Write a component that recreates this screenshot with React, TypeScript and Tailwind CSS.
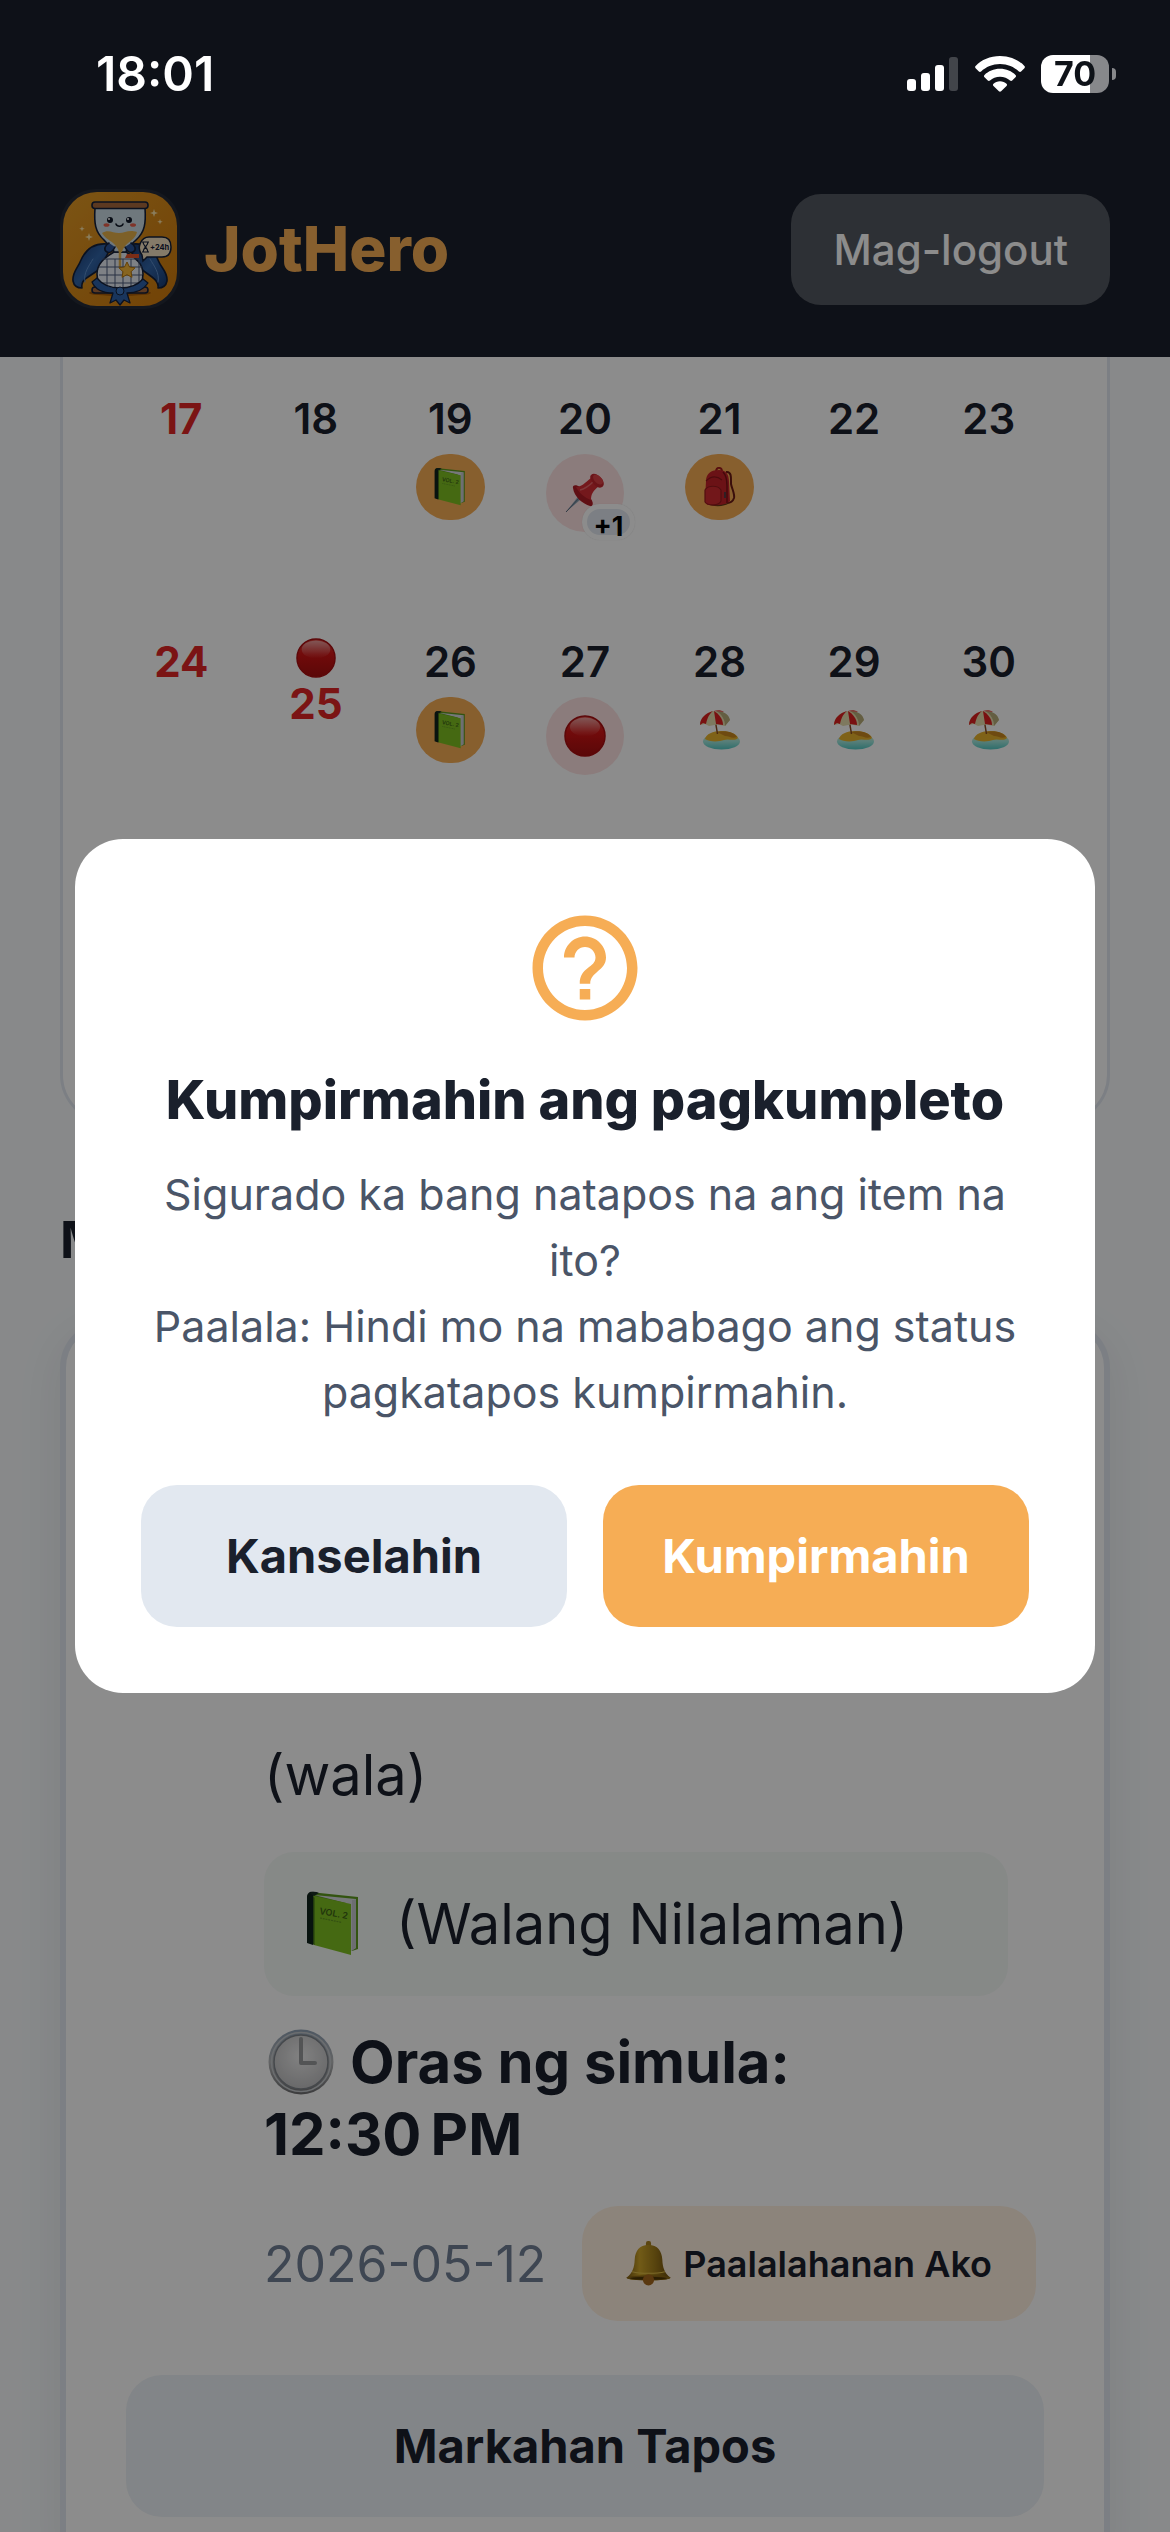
import React from "react";

function StatusBar() {
  return (
    <div className="fixed inset-x-0 top-0 z-30 flex h-[148px] items-center justify-between pr-[54px] pl-24 text-white">
      <span className="text-[48px] leading-[56px] font-semibold">18:01</span>
      <div className="flex items-center gap-4">
        <svg className="h-9 w-[52px]" viewBox="0 0 52 36" fill="#fff" aria-hidden="true">
          <rect x="0" y="23" width="9" height="12" rx="3" />
          <rect x="14" y="17" width="9" height="18" rx="3" />
          <rect x="28" y="9" width="9" height="26" rx="3" />
          <rect x="42" y="1" width="9" height="34" rx="3" fillOpacity=".22" />
        </svg>
        <svg className="h-9 w-[50px]" viewBox="0 0 50 36" fill="#fff" aria-hidden="true">
          <path d="M25 0C34.8 0 43.6 3.8 49.4 9.9c.7.7.7 1.6 0 2.3l-3.3 3.3c-.6.6-1.5.6-2.2 0C39.1 10.900 32.4 8 25 8S10.900 10.900 6.100 15.500c-.7.6-1.600.6-2.200 0L.6 12.200c-.7-.7-.7-1.600 0-2.300C6.400 3.800 15.200 0 25 0z" />
          <path d="M25 12.800c6.200 0 11.800 2.400 15.500 6.200.7.7.7 1.600 0 2.300l-3.300 3.300c-.6.6-1.500.6-2.200 0-2.500-2.400-6-3.900-10-3.900s-7.500 1.500-10 3.900c-.7.6-1.600.6-2.200 0l-3.300-3.300c-.7-.7-.7-1.600 0-2.300C13.200 15.200 18.800 12.800 25 12.800z" />
          <path d="M25 25.200c2.600 0 4.900.9 6.500 2.500.7.7.7 1.500 0 2.200l-5.400 5.400c-.6.6-1.600.6-2.200 0l-5.400-5.400c-.7-.7-.7-1.500 0-2.200 1.600-1.600 3.900-2.500 6.500-2.500z" />
        </svg>
        <div className="flex items-center gap-[3px]">
          <div className="flex h-[38px] w-[68px] items-center justify-center rounded-[12px] bg-linear-to-r from-white from-72% to-[#87888b] to-72% text-[34px] leading-[38px] font-bold text-[#0e1218]">
            70
          </div>
          <div className="h-3 w-1 rounded-r-full bg-[#87888b]" />
        </div>
      </div>
    </div>
  );
}

function Logo() {
  return (
    <div className="size-[120px] rounded-[36px] bg-white/5 p-[3px]">
      <svg className="size-full rounded-[34px]" viewBox="0 0 114 114" role="img" aria-label="JotHero">
        <defs>
          <linearGradient id="lg-bg" x1="0" y1="0" x2="1" y2="1">
            <stop offset="0" stopColor="#e29a26" />
            <stop offset="1" stopColor="#cf7a0c" />
          </linearGradient>
          <linearGradient id="lg-cape" x1="0" y1="0" x2="1" y2="1">
            <stop offset="0" stopColor="#17366c" />
            <stop offset=".5" stopColor="#3265a8" />
            <stop offset="1" stopColor="#17386e" />
          </linearGradient>
        </defs>
        <rect width="114" height="114" fill="url(#lg-bg)" />
        <ellipse cx="57" cy="101" rx="31" ry="3" fill="#a85c08" />
        <g stroke="#14203a" strokeWidth="1.6" strokeLinejoin="round" strokeLinecap="round">
          <path d="M44 52c-12-1-21 5-26 16-3 8-9 12-8 21 1 5 4 7 9 7-1-5 1-8 6-11l12-8 8-16z" fill="url(#lg-cape)" />
          <path d="M70 52c12-1 21 5 25 16 3 8 10 12 9 21-1 5-4 7-9 7 1-5-2-8-6-11l-11-8-9-16z" fill="url(#lg-cape)" />
          <path d="M22 90c-2-9 4-16 8-23M95 90c2-9-4-16-8-23" fill="none" stroke="#5d8cc8" strokeWidth="1" />
          <rect x="29" y="95" width="56" height="6" rx="3" fill="#a8683c" />
          <path d="M51 60c-10 6-17 12-17 22 0 6 3 12 8 15h30c5-3 8-9 8-15 0-10-7-16-17-22z" fill="#e6ecf2" />
          <path d="M32 16h50c1 15 0 24-9 32-5 5-9 7-10 12H51c-1-5-6-7-10-12-9-8-10-17-9-32z" fill="#cbdbe3" />
          <rect x="29" y="10" width="56" height="6.500" rx="3" fill="#a8683c" />
          <path d="M46 51c-4 2-6 7-2 9s7-3 8-5M68 51c4 2 6 7 2 9s-7-3-8-5" fill="#2a559b" />
        </g>
        <path d="M39 41c6-4 11 0 17 0s10-4 18-1c-1 5-5 8-10 12-2 2-4 4-5 8h-3c-1-4-3-6-6-9-4-3-9-6-11-10z" fill="#e3b04a" />
        <path d="M57 58v18" stroke="#e3b04a" strokeWidth="2.500" />
        <path d="M64 62h12v4H62z" fill="#e0532a" />
        <path d="M39 67h38M36 75h43M36 83h43M38 91h39M44 67v28M52 67v29M60 67v29M68 67v29M76 67v26" stroke="#4a5a7a" strokeWidth="1" fill="none" />
        <path d="M64 70l2.500 5 5.500.8-4 4 1 5.500-5-2.600-5 2.600 1-5.500-4-4 5.500-.8z" fill="#f6b93b" stroke="#b9770c" strokeWidth="1" />
        <path d="M34 86c7 9 16 10 23 10s16-1 23-9l5 4c-4 6-11 10-21 10l3 10-6-3-4 5-4-5-6 3 3-10c-10 0-18-4-21-11z" fill="#2f62a8" stroke="#14203a" strokeWidth="1.300" strokeLinejoin="round" />
        <circle cx="57" cy="99" r="4" fill="#3b75c0" stroke="#14203a" strokeWidth="1" />
        <circle cx="47" cy="28" r="3" fill="#101828" />
        <circle cx="66" cy="28" r="3" fill="#101828" />
        <circle cx="46" cy="27" r="1" fill="#fff" />
        <circle cx="65" cy="27" r="1" fill="#fff" />
        <ellipse cx="43.500" cy="33" rx="3" ry="1.800" fill="#e8604c" />
        <ellipse cx="70" cy="33" rx="3" ry="1.800" fill="#e8604c" />
        <path d="M53 32c1 3 6 3 7 0" stroke="#101828" strokeWidth="1.500" fill="none" strokeLinecap="round" />
        <path d="M86 45h13c6 0 9 4 9 10s-3 10-9 10H84l-4 4-1-6c-6-7-1-18 7-18z" fill="#f1dfc0" stroke="#14203a" strokeWidth="1.500" />
        <path d="M79 50h7M79 60h7M80 50c0 4 5 6 5 10M85 50c0 4-5 6-5 10" stroke="#14203a" strokeWidth="1.200" fill="none" />
        <text x="87" y="58" fontSize="7.500" fontWeight="700" fill="#14203a">+24h</text>
        <path d="M91 17l1 3 3 1-3 1-1 3-1-3-3-1 3-1zM26 41l1 3 3 1-3 1-1 3-1-3-3-1 3-1zM97 27l.7 2 2 .7-2 .7-.7 2-.7-2-2-.7 2-.7zM19 34l.7 2 2 .7-2 .7-.7 2-.7-2-2-.7 2-.7z" fill="#fbe3a8" />
      </svg>
    </div>
  );
}

function Book({ className }: { className: string }) {
  return (
    <svg className={className} viewBox="0 0 54 66" aria-label="Libro" role="img">
      <path d="M4 1L52 6V58L46 60L3 52z" fill="#5d9a1e" />
      <path d="M8 4L50 8V57L44 61L40 12z" fill="#d8dadf" />
      <path d="M47 9v50M49 8.500v49" stroke="#a9acb3" strokeWidth=".8" />
      <path d="M8 5L45 13V64L8 54z" fill="#7fc022" />
      <path d="M1 6C1 2 4 0 8 1l4 .500C8 2 7 4 7 7V54L1 52z" fill="#10231c" />
      <path d="M7 6l1.500.500V54L7 53.500z" fill="#3f6b18" />
      <path d="M4 2c3-2 6-1 9 0L8 5z" fill="#1b2f26" />
      <text x="13" y="23" fontSize="9" fontWeight="600" fill="#3d6216" transform="rotate(10 13 23)">VOL. 2</text>
      <path d="M14 27l22 4.500" stroke="#5f9520" strokeWidth="1.200" strokeDasharray="2 .8" />
    </svg>
  );
}

function RedDot({ className }: { className: string }) {
  return (
    <svg className={className} viewBox="0 0 42 42" aria-label="Pulang bilog" role="img">
      <defs>
        <linearGradient id="dot-base" x1="0" y1="0" x2="0" y2="1">
          <stop offset="0" stopColor="#d8403c" />
          <stop offset=".4" stopColor="#d01414" />
          <stop offset="1" stopColor="#a40f10" />
        </linearGradient>
        <linearGradient id="dot-gloss" x1="0" y1="0" x2="0" y2="1">
          <stop offset="0" stopColor="#fff" stopOpacity=".5" />
          <stop offset="1" stopColor="#fff" stopOpacity="0" />
        </linearGradient>
      </defs>
      <circle cx="21" cy="21" r="20" fill="url(#dot-base)" stroke="#a80d10" strokeWidth="1.500" />
      <ellipse cx="21" cy="12" rx="15" ry="9.500" fill="url(#dot-gloss)" />
    </svg>
  );
}

function Pin({ className }: { className: string }) {
  return (
    <svg className={className} viewBox="0 0 40 40" aria-label="Pin" role="img">
      <path d="M1 39L15 21l3.500 3z" fill="#8fa3b5" />
      <path d="M1 39L16.500 22.500" stroke="#56697c" strokeWidth="1" />
      <path d="M8 15c-1-3 3-4 7-1l11 12c3 4 2 8-1 7C18 31 9 24 8 15z" fill="#b01c25" />
      <path d="M11 14C16 14 20 10 26 5L34 13C28 18 26 21 26 27 20 25 14 20 11 14z" fill="#d42c34" />
      <path d="M15 17c5-1 10-5 14-9" stroke="#e8666a" strokeWidth="1.500" fill="none" />
      <path d="M26 2c3-3 7 0 10 3s4 7 1 9-7-1-9-4-4-6-2-8z" fill="#c4262e" />
      <ellipse cx="33" cy="6.500" rx="6" ry="3.500" transform="rotate(45 33 6.500)" fill="#dc4145" />
    </svg>
  );
}

function Backpack({ className }: { className: string }) {
  return (
    <svg className={className} viewBox="0 0 32 40" aria-label="Bag" role="img">
      <path d="M22 5c6-1 5 7 5 12 1 5 4 10 3 14-1 3-4 5-7 5" fill="none" stroke="#6b1a14" strokeWidth="2" />
      <path d="M12 5c0-6 6-5 6 0" fill="none" stroke="#a01a1c" strokeWidth="2" />
      <path d="M3 37c6 3 18 3 22-1z" fill="#5f3a14" />
      <path d="M2 14C2 6 8 3 15 3c7 0 10 4 10 12l1 19c-3 4-14 5-20 4C2 38 1 36 1 33z" fill="#c42228" />
      <path d="M19 5c3 3 4 8 4 14v17" fill="none" stroke="#7d1216" strokeWidth="1.500" />
      <path d="M2 14C7 9 13 9 18 13" fill="none" stroke="#8c1519" strokeWidth="1.200" />
      <path d="M1 23c3-5 13-5 16 0v11c-2 5-13 5-16 1z" fill="#d02b31" stroke="#951a1d" strokeWidth="1.200" />
      <path d="M21 25v6" stroke="#35404a" strokeWidth="1.500" />
    </svg>
  );
}

function Beach({ className }: { className: string }) {
  return (
    <svg className={className} viewBox="0 0 40 40" aria-label="Bakasyon" role="img">
      <defs>
        <linearGradient id="sea" x1="0" y1="0" x2="0" y2="1">
          <stop offset="0" stopColor="#e9e6c0" />
          <stop offset=".5" stopColor="#9fe6dc" />
          <stop offset="1" stopColor="#52c9c4" />
        </linearGradient>
      </defs>
      <ellipse cx="21.500" cy="31.500" rx="18.500" ry="8" fill="url(#sea)" />
      <path d="M5 29c1-5 8-8 16-8 9 0 16 3 17 7-4 4-9 0-14 2S9 32 5 29z" fill="#e8b32c" />
      <path d="M17 22c8-2 17 0 20 5-5 2-8-1-12-1z" fill="#c9871f" />
      <path d="M15 9l2.500 15" stroke="#8a4c22" strokeWidth="1.500" />
      <path d="M0 15C0 7 7 2 14 1c7 0 14 3 16 9l-5 6-8-1.500-8 1.500-4-2z" fill="#e5dcae" />
      <path d="M0 15C0 8 6 3 13 1 8 5 7 10 6 14l-3-1z" fill="#dc1f1f" />
      <path d="M14 1c5 3 9 8 9 14l-7-1z" fill="#dc1f1f" />
      <path d="M16 1c7 0 13 3 14 9l-5 6c0-6-3-12-9-15z" fill="#b7ab78" />
      <path d="M14 1c3-1.500 8-1 10 1-3 0-6-1-10-1z" fill="#e4473c" />
    </svg>
  );
}

function Clock({ className }: { className: string }) {
  return (
    <svg className={className} viewBox="0 0 66 66" aria-label="Orasan" role="img">
      <defs>
        <linearGradient id="clk-rim" x1="0" y1="0" x2="0" y2="1">
          <stop offset="0" stopColor="#8fa0b3" />
          <stop offset=".5" stopColor="#b4b6b8" />
          <stop offset="1" stopColor="#6e6e70" />
        </linearGradient>
        <radialGradient id="clk-face" cx=".5" cy=".4" r=".7">
          <stop offset="0" stopColor="#ececec" />
          <stop offset="1" stopColor="#b8b8ba" />
        </radialGradient>
      </defs>
      <circle cx="33" cy="33" r="32.500" fill="url(#clk-rim)" />
      <circle cx="33" cy="33" r="29.500" fill="none" stroke="#c3c7cb" strokeWidth="1.500" />
      <circle cx="33" cy="33" r="27" fill="url(#clk-face)" stroke="#7f848a" strokeWidth="1.500" />
      <path d="M33 10v24h14" fill="none" stroke="#97999c" strokeWidth="4" strokeLinecap="round" strokeLinejoin="round" />
    </svg>
  );
}

function Bell({ className }: { className: string }) {
  return (
    <svg className={className} viewBox="0 0 44 44" aria-hidden="true">
      <defs>
        <linearGradient id="bell-g" x1="0" y1="0" x2="1" y2="0">
          <stop offset="0" stopColor="#7d5a12" />
          <stop offset=".3" stopColor="#cfa62a" />
          <stop offset=".65" stopColor="#a07c1a" />
          <stop offset="1" stopColor="#6a4a0e" />
        </linearGradient>
      </defs>
      <rect x="19.500" y="0" width="5" height="7" rx="2" fill="#a8801e" />
      <path d="M22 4c9 0 13 6 13.500 14 .3 8 2 13 8 18-2 2-10 2.500-21.500 2.500S2.500 38 .5 36c6-5 7.700-10 8-18C9 10 13 4 22 4z" fill="url(#bell-g)" />
      <ellipse cx="22" cy="36" rx="21.500" ry="2.500" fill="#8a6614" />
      <ellipse cx="22" cy="36.500" rx="18" ry="1.500" fill="#4f3707" />
      <circle cx="22" cy="38" r="5.500" fill="#a4661c" />
      <path d="M6 30c8 2 24 2 32 0" stroke="#e2c04a" strokeWidth="1" fill="none" />
    </svg>
  );
}

type Day = {
  n: number;
  holiday?: boolean;
  dot?: boolean;
  item?: React.ReactNode;
};

function Chip({ children }: { children: React.ReactNode }) {
  return <div className="flex h-[66px] w-[69px] items-center justify-center rounded-[33px] bg-[#f6ad55]">{children}</div>;
}

function Target({ children, more }: { children: React.ReactNode; more?: string }) {
  return (
    <div className="relative flex size-[78px] items-center justify-center rounded-full bg-[#fee2e2]">
      {children}
      {more && (
        <span className="absolute -right-[11px] -bottom-2 flex h-9 w-[53px] items-center justify-center rounded-full border-[5px] border-white bg-[#e2e8f0] pt-2 text-[27px] leading-none font-bold text-black shadow-[0_0_1px_rgba(0,0,0,0.15)]">
          {more}
        </span>
      )}
    </div>
  );
}

const weeks: Day[][] = [
  [
    { n: 17, holiday: true },
    { n: 18 },
    { n: 19, item: <Chip><Book className="h-10 w-8" /></Chip> },
    { n: 20, item: <Target more="+1"><Pin className="size-10" /></Target> },
    { n: 21, item: <Chip><Backpack className="h-10 w-8" /></Chip> },
    { n: 22 },
    { n: 23 },
  ],
  [
    { n: 24, holiday: true },
    { n: 25, holiday: true, dot: true },
    { n: 26, item: <Chip><Book className="h-10 w-8" /></Chip> },
    { n: 27, item: <Target><RedDot className="size-[42px]" /></Target> },
    { n: 28, item: <div className="flex h-[66px] items-center"><Beach className="size-10" /></div> },
    { n: 29, item: <div className="flex h-[66px] items-center"><Beach className="size-10" /></div> },
    { n: 30, item: <div className="flex h-[66px] items-center"><Beach className="size-10" /></div> },
  ],
];

function Calendar() {
  return (
    <section className="rounded-b-[48px] border-x-[3px] border-b-[3px] border-[#e2e8f0] bg-white px-[51px] pt-[26px] pb-[251px]">
      <table className="w-full table-fixed">
        <tbody>
          {weeks.map((week, i) => (
            <tr key={i}>
              {week.map((d) => (
                <td key={d.n} className="h-[243px] p-0 pt-3 align-top">
                  <div className="flex flex-col items-center">
                    {d.dot && <RedDot className="mb-0.5 size-10" />}
                    <span
                      className={
                        d.holiday
                          ? "mb-[11px] text-[42px] leading-[48px] font-bold text-[#e02626]"
                          : "mb-[11px] text-[42px] leading-[48px] font-semibold text-[#1a202c]"
                      }
                    >
                      {d.n}
                    </span>
                    {d.item}
                  </div>
                </td>
              ))}
            </tr>
          ))}
        </tbody>
      </table>
    </section>
  );
}

function ItemCard() {
  return (
    <article className="mt-[50px] rounded-[48px] border-[6px] border-[#e2e8f0] bg-white px-[60px] pt-[412px] pb-[60px] text-[#1a202c] shadow-[0_12px_48px_rgba(26,32,44,0.08)]">
      <div className="pr-9 pl-[138px]">
        <p className="text-[56px] leading-[74px]">(wala)</p>
        <div className="mt-10 flex h-36 items-center gap-9 rounded-[30px] bg-[#f4f9f6] pl-[42px]">
          <Book className="h-[66px] w-[54px]" />
          <span className="text-[56px] leading-[74px]">(Walang Nilalaman)</span>
        </div>
        <p className="mt-[30px] text-[58px] leading-[72px] font-bold">
          <Clock className="mr-4 ml-1 inline-block size-[66px] align-[-12px]" />
          Oras ng simula: 12:30{"\u202f"}PM
        </p>
      </div>
      <div className="mt-9 flex items-center justify-between pr-2 pl-[138px]">
        <time className="text-[50px] leading-[60px] text-[#718096]">2026-05-12</time>
        <button type="button" className="flex h-[115px] items-center gap-3 rounded-[36px] bg-[#fff0e0] px-[44px] text-[36px] font-semibold whitespace-nowrap">
          <Bell className="size-[45px]" />
          Paalalahanan Ako
        </button>
      </div>
      <button type="button" className="mt-[54px] h-[142px] w-full rounded-[36px] bg-[#edf2f7] text-[47px] font-bold">
        Markahan Tapos
      </button>
    </article>
  );
}

function ConfirmDialog() {
  return (
    <div className="fixed inset-0 z-20 flex items-center justify-center bg-black/45 px-[75px]">
      <div role="dialog" aria-modal="true" aria-labelledby="confirm-title" className="flex w-full flex-col items-center rounded-[48px] bg-white p-[66px] text-center">
        <svg className="size-[126px]" viewBox="0 0 24 24" fill="#f6ad55" aria-hidden="true">
          <path d="M11 18h2v-2h-2v2zm1-16C6.480 2 2 6.480 2 12s4.480 10 10 10 10-4.480 10-10S17.520 2 12 2zm0 18c-4.410 0-8-3.590-8-8s3.590-8 8-8 8 3.590 8 8-3.590 8-8 8zm0-14c-2.210 0-4 1.790-4 4h2c0-1.100.9-2 2-2s2 .9 2 2c0 2-3 1.750-3 5h2c0-2.250 3-2.500 3-5 0-2.210-1.790-4-4-4z" />
        </svg>
        <h2 id="confirm-title" className="mt-9 text-[54px] leading-[66px] font-extrabold text-[#1a202c]">
          Kumpirmahin ang pagkumpleto
        </h2>
        <div className="mt-7 text-[43px] leading-[66px] text-[#4a5568]">
          <p>Sigurado ka bang natapos na ang item na ito?</p>
          <p>Paalala: Hindi mo na mababago ang status pagkatapos kumpirmahin.</p>
        </div>
        <div className="mt-[60px] grid w-full grid-cols-2 gap-9">
          <button type="button" className="h-[142px] rounded-[36px] bg-[#e2e8f0] text-[47px] font-bold text-[#1a202c]">
            Kanselahin
          </button>
          <button type="button" className="h-[142px] rounded-[36px] bg-[#f6ad55] text-[47px] font-bold text-white">
            Kumpirmahin
          </button>
        </div>
      </div>
    </div>
  );
}

export default function App() {
  return (
    <div className="flex h-screen flex-col overflow-hidden bg-[#f7fafc] font-['Inter','Liberation_Sans',sans-serif]">
      <StatusBar />
      <header className="flex shrink-0 items-center justify-between bg-[#1a202c] px-[60px] pt-[189px] pb-12">
        <div className="flex items-center gap-6">
          <Logo />
          <h1 className="text-[62px] leading-[72px] font-extrabold text-[#f6ad55]">JotHero</h1>
        </div>
        <button type="button" className="h-[111px] rounded-[30px] bg-white/25 px-[42px] text-[42px] font-medium text-white">
          Mag-logout
        </button>
      </header>
      <main className="min-h-0 grow overflow-hidden px-[60px]">
        <Calendar />
        <h2 className="mt-[87px] text-[51px] leading-[60px] font-bold text-[#1a202c]">Mga</h2>
        <ItemCard />
      </main>
      <ConfirmDialog />
    </div>
  );
}
